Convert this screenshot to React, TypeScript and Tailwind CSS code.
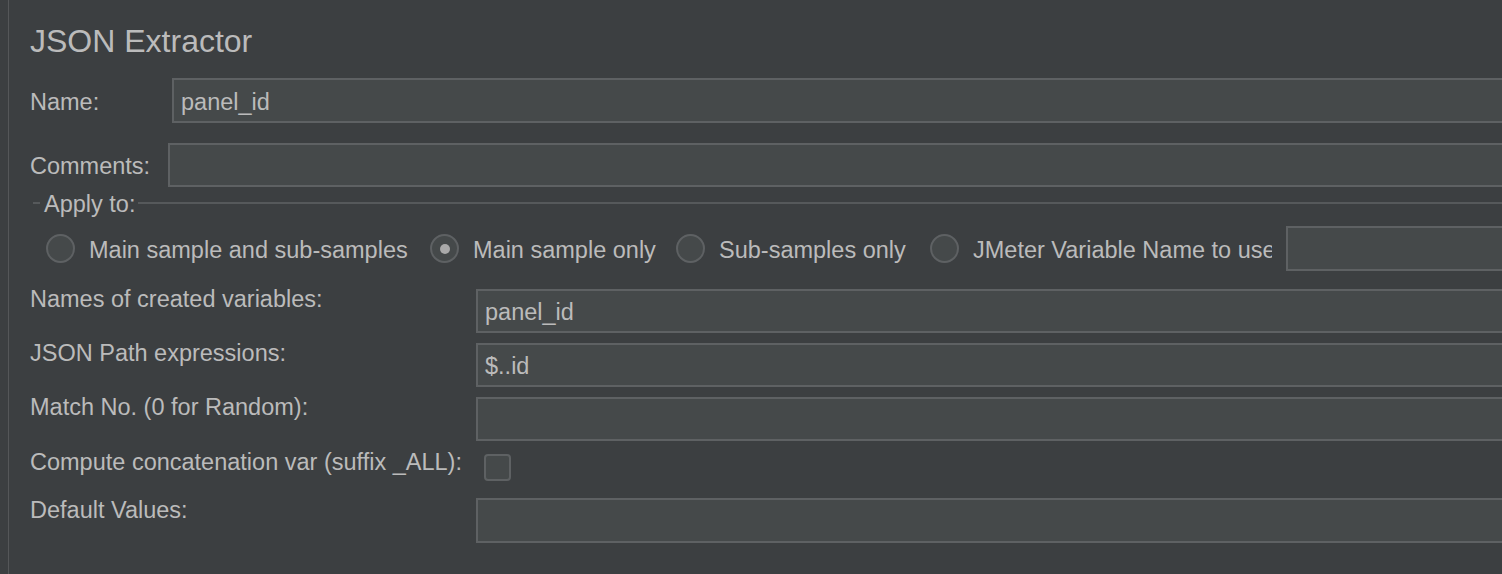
import React from "react";

const inputBase =
  "border-2 border-r-0 border-[#5e6163] bg-[#45494a] pl-[7px] leading-[20px] whitespace-nowrap overflow-hidden";

function Field({ value = "", h = "h-[44px]", pt = "pt-[11px]", extra = "" }: { value?: string; h?: string; pt?: string; extra?: string }) {
  return <div className={`${inputBase} ${h} ${pt} ${extra} flex-1 min-w-0`}>{value}</div>;
}

function Radio({ checked = false, label, width }: { checked?: boolean; label: string; width: string }) {
  return (
    <div className={`flex items-center shrink-0 ${width}`}>
      <div className="w-[29px] h-[29px] shrink-0 rounded-full border-2 border-[#5e6163] bg-[#45494a] flex items-center justify-center">
        {checked && <div className="w-[10px] h-[10px] rounded-full bg-[#a9a9a9]" />}
      </div>
      <div className="ml-[14px] leading-[28px] mt-[3px] whitespace-nowrap">{label}</div>
    </div>
  );
}

export default function App() {
  return (
    <div className="w-[1502px] h-[574px] overflow-hidden bg-[#3c3f41] text-[#bbbbbb] text-[23.5px] font-['Liberation_Sans',Arial,sans-serif] pl-[8px]">
      <div className="h-full border-l border-[#555759] pl-[21px] flex flex-col">
        {/* Title */}
        <div className="pt-[23px] text-[32px] leading-[36px]">JSON Extractor</div>

        {/* Name */}
        <div className="flex items-start mt-[19px] h-[45px]">
          <div className="w-[142px] shrink-0 leading-[20px] mt-[14px]">Name:</div>
          <Field value="panel_id" h="h-[45px]" pt="pt-[12px]" />
        </div>

        {/* Comments */}
        <div className="flex items-start mt-[20px] h-[44px]">
          <div className="w-[138px] shrink-0 leading-[20px] mt-[13px]">Comments:</div>
          <Field />
        </div>

        {/* Apply to fieldset header */}
        <div className="flex items-center mt-[6px] h-[20px]">
          <div className="ml-[3px] w-[7px] h-[1.5px] bg-[#56595b]" />
          <div className="ml-[4px] leading-[20px] mt-[1px]">Apply to:</div>
          <div className="ml-[3px] flex-1 h-[1.5px] bg-[#56595b]" />
        </div>

        {/* Radios */}
        <div className="flex items-center mt-[13px] h-[45px]">
          <div className="w-[16px] shrink-0" />
          <Radio label="Main sample and sub-samples" width="w-[384px]" />
          <Radio checked label="Main sample only" width="w-[246px]" />
          <Radio label="Sub-samples only" width="w-[254px]" />
          <div className="w-[356px] shrink-0 flex items-center">
            <div className="w-[29px] h-[29px] shrink-0 rounded-full border-2 border-[#5e6163] bg-[#45494a]" />
            <div className="ml-[14px] w-[299px] leading-[28px] mt-[3px] whitespace-nowrap overflow-hidden">JMeter Variable Name to use</div>
          </div>
          <Field h="h-[45px]" />
        </div>

        {/* Names of created variables */}
        <div className="flex items-start mt-[18px] h-[44px]">
          <div className="w-[446px] shrink-0 leading-[20px]">Names of created variables:</div>
          <Field value="panel_id" pt="pt-[11px]" />
        </div>

        {/* JSON Path expressions */}
        <div className="flex items-start mt-[10px] h-[44px]">
          <div className="w-[446px] shrink-0 leading-[20px]">JSON Path expressions:</div>
          <Field value="$..id" pt="pt-[11px]" />
        </div>

        {/* Match No */}
        <div className="flex items-start mt-[10px] h-[44px]">
          <div className="w-[446px] shrink-0 leading-[20px]">Match No. (0 for Random):</div>
          <Field />
        </div>

        {/* Compute concatenation */}
        <div className="flex items-start mt-[10px] h-[37px]">
          <div className="w-[446px] shrink-0 leading-[20px] mt-[1px] whitespace-nowrap">Compute concatenation var (suffix _ALL):</div>
          <div className="ml-[8px] mt-[3px] w-[27px] h-[27px] rounded-[4px] border-2 border-[#5e6163] bg-[#45494a]" />
        </div>

        {/* Default Values */}
        <div className="flex items-start mt-[10px] h-[45px]">
          <div className="w-[446px] shrink-0 leading-[20px] mt-[2px]">Default Values:</div>
          <Field h="h-[45px]" />
        </div>
      </div>
    </div>
  );
}
